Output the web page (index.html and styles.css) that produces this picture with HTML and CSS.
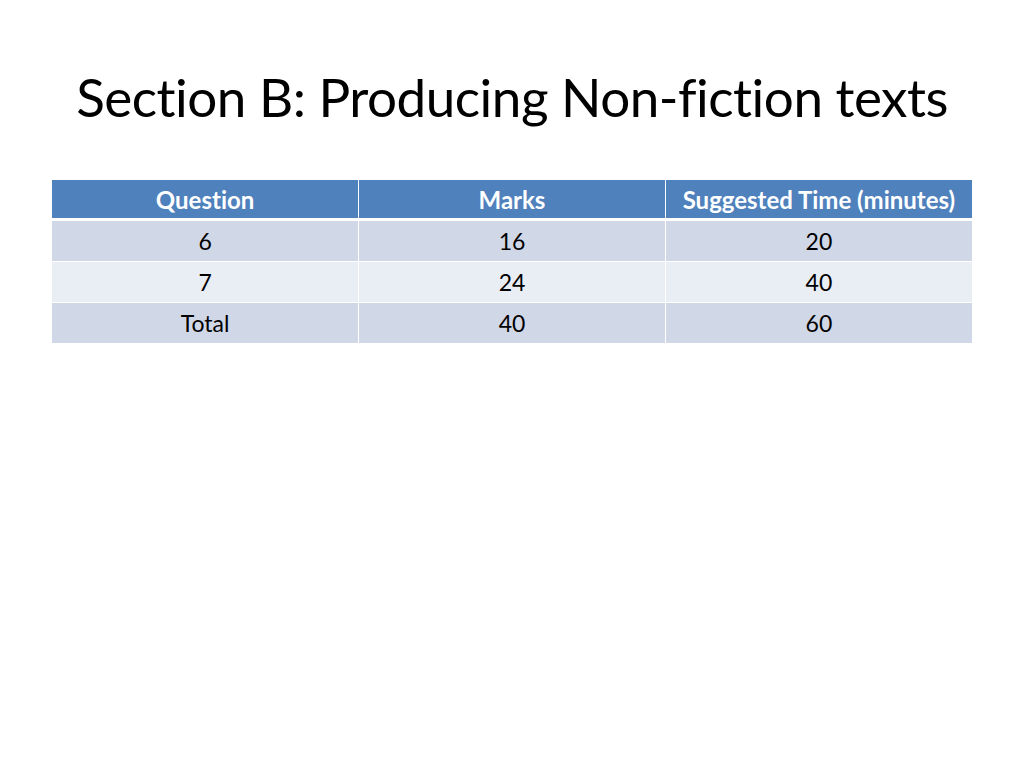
FILE: index.html
```html
<!DOCTYPE html>
<html lang="en">
<head>
<meta charset="utf-8">
<title>Section B: Producing Non-fiction texts</title>
<link rel="stylesheet" href="styles.css">
</head>
<body>
<main class="slide">
  <h1 class="title">Section B: Producing Non-fiction texts</h1>
  <table class="marks">
    <thead>
      <tr><th>Question</th><th>Marks</th><th>Suggested Time (minutes)</th></tr>
    </thead>
    <tbody>
      <tr class="odd"><td>6</td><td>16</td><td>20</td></tr>
      <tr class="even"><td>7</td><td>24</td><td>40</td></tr>
      <tr class="odd"><td>Total</td><td>40</td><td>60</td></tr>
    </tbody>
  </table>
</main>
</body>
</html>
```
FILE: styles.css
```css
html, body {
  margin: 0;
  padding: 0;
  background: #ffffff;
}
.slide {
  width: 1024px;
  height: 768px;
  display: flex;
  flex-direction: column;
  align-items: center;
  font-family: Lato, "Open Sans", sans-serif;
  font-variant-ligatures: none;
  color: #000000;
}
.title {
  margin: 0;
  height: 180px;
  display: flex;
  align-items: center;
  justify-content: center;
  padding-top: 12px;
  box-sizing: border-box;
  font-weight: 400;
  font-size: 53px;
  letter-spacing: -0.5px;
  width: 100%;
}
.marks {
  width: 920px;
  border-collapse: collapse;
  table-layout: fixed;
  font-size: 23px;
}
.marks th, .marks td {
  border: 1px solid #ffffff;
  text-align: center;
  vertical-align: middle;
  padding: 0;
}
.marks tbody tr:first-child td {
  border-top: none;
}
.marks th {
  background: #4f81bd;
  color: #ffffff;
  font-weight: 700;
  font-size: 24px;
  height: 38px;
  border-top: none;
  border-bottom: 3px solid #ffffff;
}
.marks td {
  height: 40px;
}
.marks .odd td { background: #d0d8e8; }
.marks .even td { background: #e9edf4; }
.marks tr > :first-child { border-left: none; }
.marks tr > :last-child { border-right: none; }
```
